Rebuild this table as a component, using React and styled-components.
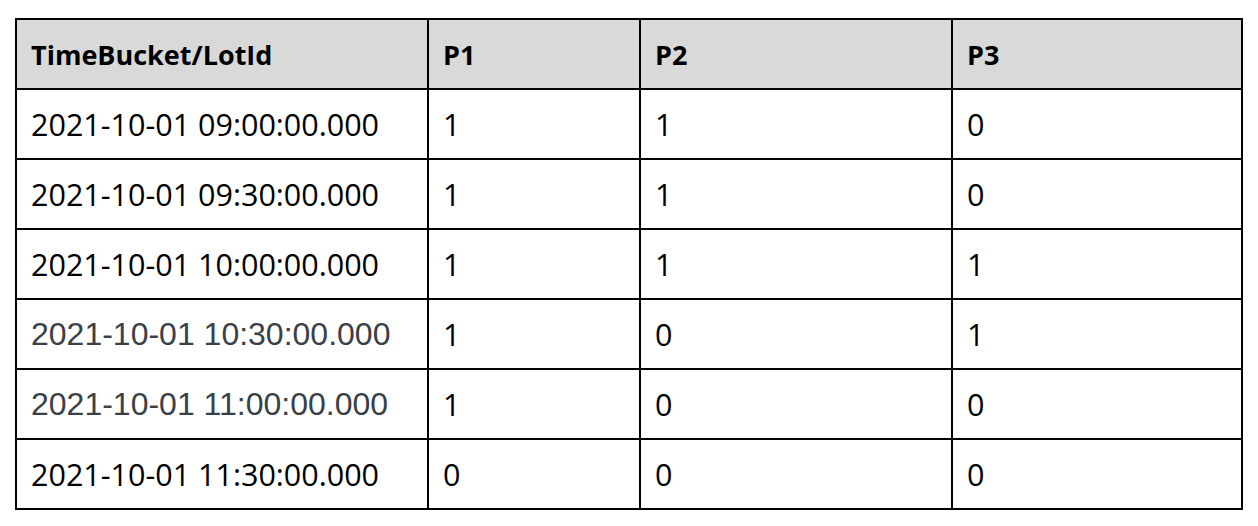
import React from 'react'
import styled, { createGlobalStyle } from 'styled-components'

const GlobalStyle = createGlobalStyle`
  html, body {
    margin: 0;
    padding: 0;
    background: #ffffff;
  }
  body {
    font-family: "Open Sans", "Noto Sans", sans-serif;
  }
`

const Page = styled.div`
  padding: 18px 0 0 15px;
`

const Table = styled.table`
  border-collapse: collapse;
  table-layout: fixed;
  width: 1226px;
  border: 2px solid #000;
`

const HeadCell = styled.th`
  background: #d9d9d9;
  border: 2px solid #000;
  height: 68px;
  padding: 0 14px;
  text-align: left;
  font-weight: 700;
  font-size: 27px;
  color: #000;
`

const Cell = styled.td`
  border: 2px solid #000;
  height: 68px;
  padding: 0 14px;
  text-align: left;
  font-size: ${p => (p.$muted ? '32px' : '30.5px')};
  color: ${p => (p.$muted ? '#3a4047' : '#000')};
  font-family: ${p => (p.$muted ? '"Liberation Sans", Arial, sans-serif' : '"Open Sans", "Noto Sans", sans-serif')};
`

const columns = [
  { label: 'TimeBucket/LotId', width: 412 },
  { label: 'P1', width: 212 },
  { label: 'P2', width: 312 },
  { label: 'P3', width: 290 },
]

const rows = [
  { time: '2021-10-01 09:00:00.000', values: [1, 1, 0] },
  { time: '2021-10-01 09:30:00.000', values: [1, 1, 0] },
  { time: '2021-10-01 10:00:00.000', values: [1, 1, 1] },
  { time: '2021-10-01 10:30:00.000', values: [1, 0, 1], muted: true },
  { time: '2021-10-01 11:00:00.000', values: [1, 0, 0], muted: true },
  { time: '2021-10-01 11:30:00.000', values: [0, 0, 0] },
]

export default function App() {
  return (
    <Page>
      <GlobalStyle />
      <Table>
        <colgroup>
          {columns.map(c => (
            <col key={c.label} style={{ width: c.width }} />
          ))}
        </colgroup>
        <thead>
          <tr>
            {columns.map(c => (
              <HeadCell key={c.label}>{c.label}</HeadCell>
            ))}
          </tr>
        </thead>
        <tbody>
          {rows.map(r => (
            <tr key={r.time}>
              <Cell $muted={r.muted}>{r.time}</Cell>
              {r.values.map((v, i) => (
                <Cell key={i}>{v}</Cell>
              ))}
            </tr>
          ))}
        </tbody>
      </Table>
    </Page>
  )
}
